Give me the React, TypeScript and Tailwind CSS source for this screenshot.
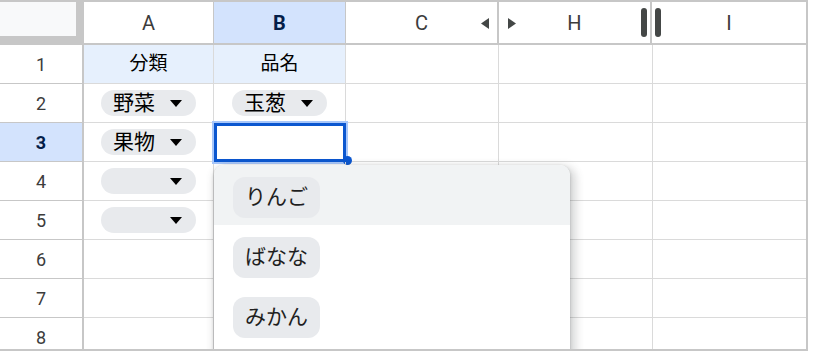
import React from "react";

const CJK = "font-['Roboto','Noto_Sans_CJK_JP',sans-serif]";

function Caret() {
  return (
    <svg width="12" height="7" viewBox="0 0 12 7" className="shrink-0">
      <polygon points="0,0 12,0 6,7" fill="#000" />
    </svg>
  );
}

function CellChip({ text }: { text?: string }) {
  return (
    <div className="w-[95px] h-[26px] rounded-full bg-[#e8eaed] flex items-center pl-[12px] pr-[14px]">
      <span className={`text-[21px] leading-none text-[#000] ${CJK}`}>{text ?? ""}</span>
      <div className="flex-1" />
      <Caret />
    </div>
  );
}

const rowHeadBase =
  "w-[84px] shrink-0 h-full border-r-2 border-b border-[#c7c7c7] flex items-center justify-center text-[18px] font-['Roboto','Liberation_Sans',sans-serif]";

function Row({
  n,
  selected,
  a,
  b,
  aClass = "",
  bClass = "",
}: {
  n: number;
  selected?: boolean;
  a?: React.ReactNode;
  b?: React.ReactNode;
  aClass?: string;
  bClass?: string;
}) {
  return (
    <div className="flex h-[39px] shrink-0">
      <div
        className={`${rowHeadBase} ${
          selected ? "bg-[#d3e3fd] text-[#041e49] font-bold" : "bg-white text-[#3c3c3c]"
        }`}
      >
        {n}
      </div>
      <div className={`w-[130px] shrink-0 border-r border-b border-[#dadada] flex items-center justify-center ${aClass}`}>
        {a}
      </div>
      <div className={`w-[132px] shrink-0 border-r border-b border-[#dadada] flex items-center justify-center relative ${bClass}`}>
        {b}
      </div>
      <div className="w-[153px] shrink-0 border-r border-b border-[#dadada]" />
      <div className="w-[154px] shrink-0 border-r border-b border-[#dadada]" />
      <div className="w-[153px] shrink-0 border-b border-[#dadada]" />
    </div>
  );
}

function MenuItem({ text, active }: { text: string; active?: boolean }) {
  return (
    <div className={`h-[60px] pt-[12px] pl-[19px] ${active ? "bg-[#f1f3f4]" : "bg-white"}`}>
      <div className="inline-flex h-[41px] items-center px-[12px] rounded-[12px] bg-[#e8eaed]">
        <span className={`text-[21px] leading-none text-[#1f1f1f] ${CJK}`}>{text}</span>
      </div>
    </div>
  );
}

export default function App() {
  const headFont = "font-['Roboto','Liberation_Sans',sans-serif] text-[20px] text-[#3c3c3c]";
  return (
    <div className="w-[819px] h-[351px] bg-white overflow-hidden">
      <div className="relative w-[808px] h-[351px] border-t-2 border-r-2 border-b-2 border-[#c7c7c7] overflow-hidden flex flex-col">
        {/* Column header */}
        <div className="flex h-[43px] shrink-0 border-b-2 border-[#c7c7c7]">
          <div className="w-[84px] shrink-0 h-full bg-[#c7c7c7]">
            <div className="w-[76px] h-[34px] bg-[#f8f9fa]" />
          </div>
          <div className={`w-[130px] shrink-0 border-r border-[#c7c7c7] flex items-center justify-center ${headFont}`}>A</div>
          <div className="w-[132px] shrink-0 border-r border-[#c7c7c7] bg-[#d3e3fd] flex items-center justify-center font-['Roboto','Liberation_Sans',sans-serif] text-[20px] font-bold text-[#041e49]">
            B
          </div>
          <div className={`w-[153px] shrink-0 border-r-2 border-[#c7c7c7] flex items-center justify-center relative ${headFont}`}>
            C
            <svg width="8" height="11" viewBox="0 0 8 11" className="absolute right-[8px] top-[16px]">
              <polygon points="8,0 8,11 0,5.5" fill="#444746" />
            </svg>
          </div>
          <div className={`w-[153px] shrink-0 border-r-2 border-[#c7c7c7] flex items-center justify-center relative ${headFont}`}>
            H
            <svg width="8" height="11" viewBox="0 0 8 11" className="absolute left-[9px] top-[16px]">
              <polygon points="0,0 0,11 8,5.5" fill="#444746" />
            </svg>
            <div className="absolute right-[3px] top-[6px] w-[6px] h-[29px] rounded-full bg-[#444746]" />
          </div>
          <div className={`w-[154px] shrink-0 flex items-center justify-center relative ${headFont}`}>
            I
            <div className="absolute left-[3px] top-[6px] w-[6px] h-[29px] rounded-full bg-[#444746]" />
          </div>
        </div>

        <Row
          n={1}
          aClass="bg-[#e6f0fd]"
          bClass="bg-[#e6f0fd]"
          a={<span className={`text-[19px] text-[#000] ${CJK}`}>分類</span>}
          b={<span className={`text-[19px] text-[#000] ${CJK}`}>品名</span>}
        />
        <Row n={2} a={<CellChip text="野菜" />} b={<CellChip text="玉葱" />} />
        <Row
          n={3}
          selected
          a={<CellChip text="果物" />}
          b={
            <div className="absolute left-0 top-0 w-[132px] h-[39px] border-[3px] border-[#0b57d0] shadow-[0_0_0_2px_#a8c7fa]">
              <div className="absolute left-[126px] top-[30px] w-[9px] h-[9px] rounded-full bg-[#0b57d0]" />
            </div>
          }
        />
        <Row n={4} a={<CellChip />} />
        <Row n={5} a={<CellChip />} />
        <Row n={6} />
        <Row n={7} />
        <Row n={8} />

        {/* Dropdown */}
        <div className="absolute left-[214px] top-[163px] w-[356px] h-[200px] bg-white rounded-t-[10px] overflow-hidden shadow-[0_1px_3px_rgba(60,64,67,0.3),3px_4px_8px_3px_rgba(60,64,67,0.2)]">
          <MenuItem text="りんご" active />
          <MenuItem text="ばなな" />
          <MenuItem text="みかん" />
        </div>
      </div>
    </div>
  );
}
